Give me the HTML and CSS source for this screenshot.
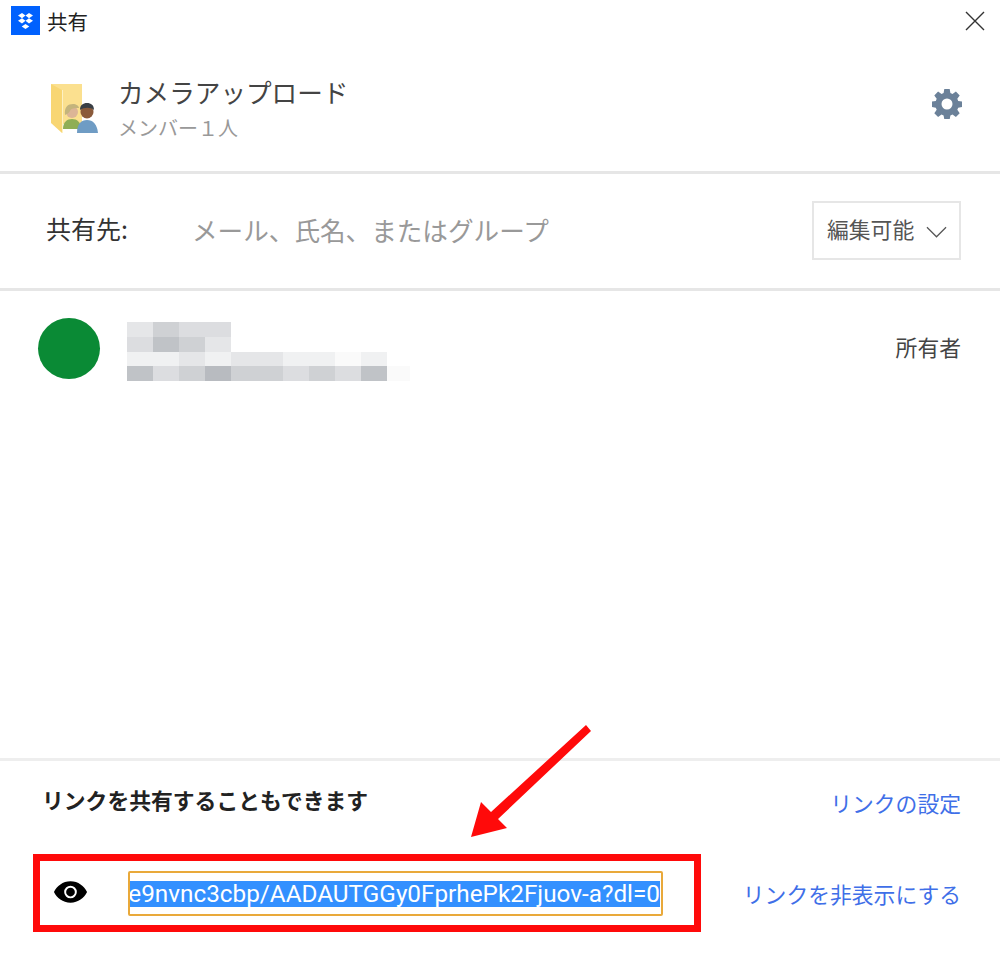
FILE: index.html
```html
<!DOCTYPE html>
<html>
<head>
    <meta name="viewport" content="width=device-width, initial-scale=1" />
    <title>共有</title>
    <link rel="stylesheet" href="styles.css">
</head>

<body>

<div class="window">
    <div class="titlebar">
        <svg class="app-logo" viewBox="0 0 29 29">
            <rect width="29" height="29" fill="#0061fe"/>
            <path fill="#fff" d="M11 7 7 9.600l4 2.600 3.500-2.600zM18 7l-3.500 2.600 3.500 2.600 4-2.600zM7 14.800l4 2.600 3.500-2.600-3.500-2.600zM18 12.200l-3.500 2.600 3.500 2.600 4-2.600zM14.500 18l-3.800 2.400 3.800 2.600 3.800-2.600z"/>
        </svg>
        <span class="title-text">共有</span>
        <svg class="close-icon" viewBox="0 0 20 20">
            <path d="M1 1l18 18M19 1L1 19" stroke="#333" stroke-width="1.4" fill="none"/>
        </svg>
    </div>

    <div class="folder-head">
        <svg class="folder-icon" viewBox="0 0 48 50">
            <path fill="#fbe08f" d="M1 0h31v40H12z"/>
            <path fill="#f8d673" d="M1 0l11 6v43L1 39z"/>
            <path fill="#fdf1c4" d="M12 6h1v43h-1z"/>
            <circle cx="22" cy="28" r="6" fill="#dcb596"/>
            <path fill="#c4b47c" d="M15 31c-1-8 3-11 8-11 3 0 6 2 6 4-4 0-8 0-9 3-1 2-3 3-5 4z"/>
            <path fill="#8fae55" d="M13 45c0-7 4-10 9-10s9 3 9 10z"/>
            <path fill="#fff" d="M13 45l14 3H13z"/>
            <circle cx="37" cy="28" r="6.500" fill="#8a5a3a"/>
            <path fill="#3a3f45" d="M30 26c0-5 3-7 7-7s7 2 7 7c-3-3-10-3-14 0z"/>
            <path fill="#6f9cc4" d="M27 49c0-9 4-13 10-13s10 4 11 13z"/>
        </svg>
        <div class="folder-text">
            <div class="folder-name">カメラアップロード</div>
            <div class="folder-members">メンバー１人</div>
        </div>
        <svg class="gear-icon" viewBox="0 0 30 30">
            <path fill="#6b8199" fill-rule="evenodd" d="M12.300 0h5.400l.7 4.100 2.100.9 3.400-2.400 3.800 3.800-2.400 3.400.9 2.100 3.800.7v5.400l-3.800.7-.9 2.100 2.400 3.400-3.800 3.800-3.400-2.400-2.100.9-.7 3.800h-5.400l-.7-3.800-2.100-.9-3.400 2.400-3.800-3.800 2.400-3.400-.9-2.100-3.800-.7v-5.400l3.800-.7.9-2.100-2.400-3.400 3.800-3.800 3.400 2.400 2.100-.9zM15 9.500a5.500 5.500 0 1 0 0 11 5.500 5.500 0 0 0 0-11z"/>
        </svg>
    </div>

    <div class="share-row">
        <span class="share-label">共有先:</span>
        <span class="share-placeholder">メール、氏名、またはグループ</span>
        <div class="perm-select">
            <span class="perm-text">編集可能</span>
            <svg class="chevron" viewBox="0 0 22 12">
                <path d="M1 1l10 10L21 1" stroke="#555" stroke-width="1.300" fill="none"/>
            </svg>
        </div>
    </div>

    <div class="member-list">
        <div class="member">
            <div class="avatar"></div>
            <div class="blur-name">
                <i class="s2"></i><i class="s4"></i><i class="s3"></i><i class="s3"></i><i></i><i></i><i></i><i></i><i></i><i></i><i></i>
                <i class="s3"></i><i class="s5"></i><i class="s4"></i><i class="s2"></i><i></i><i></i><i></i><i></i><i></i><i></i><i></i>
                <i class="s1"></i><i class="s1"></i><i class="s2"></i><i class="s1"></i><i class="s2"></i><i class="s2"></i><i class="s1"></i><i class="s1"></i><i class="s0"></i><i class="s1"></i><i></i>
                <i class="s5"></i><i class="s3"></i><i class="s4"></i><i class="s6"></i><i class="s4"></i><i class="s4"></i><i class="s3"></i><i class="s4"></i><i class="s3"></i><i class="s5"></i><i class="s0"></i>
            </div>
            <span class="member-role">所有者</span>
        </div>
    </div>

    <div class="link-section">
        <div class="link-head">
            <span class="link-title">リンクを共有することもできます</span>
            <a class="link-action link-settings">リンクの設定</a>
        </div>
        <div class="link-row">
            <svg class="eye-icon" viewBox="0 0 36 24">
                <path fill-rule="evenodd" d="M18 1C10 1 4 6 1 12c3 6 9 11 17 11s14-5 17-11C32 6 26 1 18 1zm0 4.500a6.500 6.500 0 1 1 0 13 6.500 6.500 0 0 1 0-13zm0 2a4.500 4.500 0 1 0 0 9 4.500 4.500 0 0 0 0-9z"/>
            </svg>
            <div class="link-input"><span class="link-url">e9nvnc3cbp/AADAUTGGy0FprhePk2Fjuov-a?dl=0</span></div>
            <a class="link-action">リンクを非表示にする</a>
        </div>
    </div>

    <!-- annotation drawn over the dialog -->
    <div class="callout-box"></div>
    <svg class="callout-arrow" viewBox="0 0 140 120">
        <path fill="#ff0a0a" d="M126 5l5 6-93 88 9 9-36 9 10-35 10 10z"/>
    </svg>
</div>

</body>
</html>
```

FILE: styles.css
```css
body {
    margin: 0;
    background-color: #ffffff;
    color: #333333;
    font-family: "Noto Sans CJK JP", sans-serif;
}

.window {
    position: relative;
    display: flex;
    flex-direction: column;
    width: 1000px;
    height: 964px;
    overflow: hidden;
}

.titlebar {
    display: flex;
    align-items: center;
    height: 44px;
    padding: 0 15px 3px 11px;
    box-sizing: border-box;
}

.app-logo {
    width: 29px;
    height: 29px;
    margin-right: 7px;
}

.title-text {
    font-size: 20.500px;
    color: #222222;
}

.close-icon {
    width: 20px;
    height: 20px;
    margin-left: auto;
    margin-top: 1px;
}

.folder-head {
    display: flex;
    align-items: center;
    height: 130px;
    padding: 0 38px 6px 50px;
    box-sizing: border-box;
    border-bottom: 3px solid #e6e6e6;
}

.folder-icon {
    width: 48px;
    height: 50px;
    margin-right: 20px;
    margin-top: 8px;
}

.folder-text {
    margin-top: 9px;
}

.folder-name {
    font-size: 25.600px;
    line-height: 36px;
    color: #444444;
}

.folder-members {
    font-size: 20px;
    line-height: 32px;
    margin-top: 2px;
    color: #999999;
}

.gear-icon {
    width: 30px;
    height: 30px;
    margin-left: auto;
    margin-bottom: 2px;
}

.share-row {
    display: flex;
    align-items: center;
    height: 117px;
    padding: 0 39px 1px 46px;
    box-sizing: border-box;
    border-bottom: 3px solid #e6e6e6;
}

.share-label {
    width: 146px;
    margin-bottom: 6px;
    font-size: 25px;
    color: #333333;
}

.share-placeholder {
    margin-bottom: 2px;
    font-size: 25.600px;
    color: #999999;
}

.perm-select {
    display: flex;
    align-items: center;
    justify-content: space-between;
    width: 149px;
    height: 59px;
    margin-left: auto;
    padding: 0 12px 0 13px;
    box-sizing: border-box;
    border: 2px solid #e6e6e6;
    font-size: 21.800px;
    color: #555555;
}

.perm-text {
    margin-bottom: 5px;
}

.chevron {
    width: 21px;
    height: 12px;
    margin-top: 3px;
}

.member-list {
    flex: 1;
}

.member {
    display: flex;
    align-items: flex-start;
    padding: 27px 39px 0 38px;
}

.avatar {
    width: 62px;
    height: 61px;
    margin-right: 27px;
    border-radius: 50%;
    background-color: #0a8a35;
}

.blur-name {
    display: grid;
    grid-template-columns: repeat(10, 26px) 23px;
    grid-auto-rows: 14.750px;
    margin-top: 4px;
}

.s0 { background-color: #fafafa; }
.s1 { background-color: #f0f1f2; }
.s2 { background-color: #e5e6e8; }
.s3 { background-color: #dcdde0; }
.s4 { background-color: #cfd1d4; }
.s5 { background-color: #c0c3c7; }
.s6 { background-color: #b8bbc0; }

.member-role {
    margin-left: auto;
    margin-top: 4px;
    font-size: 21.800px;
    line-height: 50px;
    color: #444444;
}

.link-section {
    height: 206px;
    box-sizing: border-box;
    border-top: 3px solid #eeeeee;
    padding: 0 39px 0 42px;
}

.link-head {
    display: flex;
    align-items: center;
    justify-content: space-between;
    height: 84px;
}

.link-title {
    margin-bottom: 7px;
    font-size: 21.800px;
    font-weight: 700;
    color: #222222;
}

.link-action {
    font-size: 21.800px;
    color: #3f6fe8;
}

.link-settings {
    margin-bottom: 1px;
}

.link-row {
    display: flex;
    align-items: center;
    margin-top: 26px;
}

.eye-icon {
    width: 35px;
    height: 24px;
    margin-left: 11px;
    margin-right: 40px;
    margin-bottom: 4px;
}

.link-input {
    display: flex;
    align-items: center;
    justify-content: flex-end;
    width: 535px;
    height: 45px;
    margin-right: auto;
    box-sizing: border-box;
    border: 2px solid #e9a93a;
    border-radius: 2px;
    overflow: hidden;
}

.link-url {
    margin-right: 1px;
    font-family: Roboto, sans-serif;
    font-size: 24.300px;
    line-height: 26px;
    white-space: nowrap;
    background-color: #3390ff;
    color: #ffffff;
}

.callout-box {
    position: absolute;
    left: 33px;
    top: 854px;
    width: 668px;
    height: 78px;
    box-sizing: border-box;
    border: 7px solid #ff0a0a;
}

.callout-arrow {
    position: absolute;
    left: 460px;
    top: 720px;
    width: 140px;
    height: 120px;
}
```
